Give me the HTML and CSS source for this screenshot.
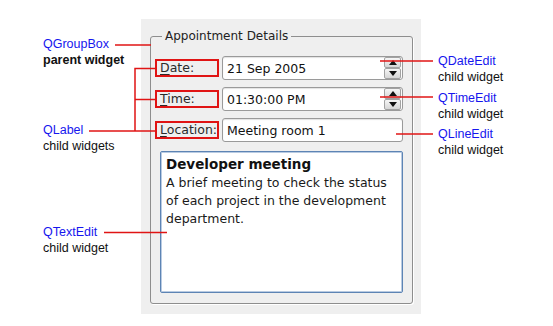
FILE: index.html
```html
<!DOCTYPE html>
<html lang="en">

<head>
  <meta charset="UTF-8">
  <title>Appointment Details widgets</title>
  <link rel="stylesheet" href="styles.css">
</head>

<body>
  <div class="diagram">

    <div class="notes notes--left">
      <p class="note note--groupbox"><span class="note__name">QGroupBox</span><br><b>parent widget</b></p>
      <p class="note note--label"><span class="note__name">QLabel</span><br>child widgets</p>
      <p class="note note--textedit"><span class="note__name">QTextEdit</span><br>child widget</p>
    </div>

    <div class="window">
      <fieldset class="group">
        <legend class="group__title">Appointment Details</legend>

        <label class="form-label"><u>D</u>ate:</label>
        <div class="field">
          <span class="field__text">21 Sep 2005</span>
          <span class="spin">
            <span class="spin__btn"><span class="arrow arrow--up"></span></span>
            <span class="spin__btn"><span class="arrow arrow--down"></span></span>
          </span>
        </div>

        <label class="form-label"><u>T</u>ime:</label>
        <div class="field">
          <span class="field__text">01:30:00 PM</span>
          <span class="spin">
            <span class="spin__btn"><span class="arrow arrow--up"></span></span>
            <span class="spin__btn"><span class="arrow arrow--down"></span></span>
          </span>
        </div>

        <label class="form-label"><u>L</u>ocation:</label>
        <div class="field">
          <span class="field__text">Meeting room 1</span>
        </div>

        <div class="text-edit">
          <p class="text-edit__title">Developer meeting</p>
          <p class="text-edit__body">A brief meeting to check the status of each project in the development department.</p>
        </div>
      </fieldset>
    </div>

    <div class="notes notes--right">
      <p class="note note--date"><span class="note__name">QDateEdit</span><br>child widget</p>
      <p class="note note--time"><span class="note__name">QTimeEdit</span><br>child widget</p>
      <p class="note note--line"><span class="note__name">QLineEdit</span><br>child widget</p>
    </div>

    <!-- callout lines -->
    <svg class="callouts" width="553" height="326" viewBox="0 0 553 326">
      <g stroke="#e01414" stroke-width="1.5" fill="none">
        <line x1="115" y1="45" x2="151" y2="45" />
        <polyline points="155,68.5 135,68.5 135,131" />
        <line x1="135" y1="99.5" x2="155" y2="99.5" />
        <line x1="89" y1="131" x2="155" y2="131" />
        <line x1="104" y1="232.5" x2="167" y2="232.5" />
        <line x1="380" y1="61" x2="433" y2="61" />
        <line x1="380" y1="97" x2="433" y2="97" />
        <line x1="396" y1="134" x2="433" y2="134" />
      </g>
    </svg>
  </div>
</body>

</html>
```

FILE: styles.css
```css
body {
  margin: 0;
  background-color: #ffffff;
}

.diagram {
  position: relative;
  display: flex;
  width: 553px;
  height: 326px;
}

/* callout texts */

.notes {
  font-family: 'Liberation Sans', Arial, sans-serif;
  font-size: 12.5px;
  line-height: 16px;
  color: #111111;
}

.notes--left {
  width: 141px;
  padding-left: 43px;
  box-sizing: border-box;
}

.notes--right {
  padding-left: 17px;
}

.note {
  margin: 0;
}

.note__name {
  color: #1616ee;
}

.note--groupbox {
  margin-top: 36px;
}

.note--label {
  margin-top: 54px;
}

.note--textedit {
  margin-top: 70px;
}

.note--date {
  margin-top: 53px;
}

.note--time {
  margin-top: 5px;
}

.note--line {
  margin-top: 4px;
}

.callouts {
  position: absolute;
  top: 0;
  left: 0;
  pointer-events: none;
}

/* the dialog */

.window {
  width: 280px;
  margin-top: 19px;
  padding: 10px 8px 10px 9px;
  box-sizing: border-box;
  align-self: flex-start;
  background-color: #efefef;
  font-family: 'DejaVu Sans', sans-serif;
  font-size: 12.5px;
  color: #1a1a1a;
}

.group {
  margin: 0;
  min-width: 0;
  padding: 13px 8px 10px 4px;
  border: 1px solid #8e8e8e;
  border-radius: 3px;
  box-shadow: 1px 1px 0 #ffffff;
  display: grid;
  grid-template-columns: 64px 181px;
  grid-template-rows: 24px 24px 24px 144px;
  column-gap: 3px;
  row-gap: 7px;
}

.group__title {
  margin-left: 7px;
  padding: 0 3px;
  font-size: 12px;
  line-height: 14px;
  color: #222222;
}

.form-label {
  align-self: center;
  height: 18px;
  padding-left: 3px;
  border: 2px solid #e01414;
  box-sizing: border-box;
  line-height: 14px;
  color: #2a2a2a;
  white-space: nowrap;
}

.form-label u {
  text-underline-offset: 2px;
}

.field {
  display: flex;
  align-items: center;
  padding: 0 1px 0 4px;
  background-color: #ffffff;
  border: 1px solid #9a9a9a;
  border-radius: 3px;
  box-shadow: inset 0 1px 1px #e2e2e2;
}

.field__text {
  flex: 1;
  color: #111111;
}

.spin {
  display: flex;
  flex-direction: column;
  width: 17px;
  height: 22px;
}

.spin__btn {
  flex: 1;
  display: flex;
  align-items: center;
  justify-content: center;
  border: 1px solid #a2a2a2;
  border-radius: 2px;
  background: linear-gradient(#f6f6f6, #d6d6d6);
}

.arrow {
  width: 0;
  height: 0;
  border-left: 4px solid transparent;
  border-right: 4px solid transparent;
}

.arrow--up {
  border-bottom: 5px solid #111111;
}

.arrow--down {
  border-top: 5px solid #111111;
}

.text-edit {
  grid-column: 1 / -1;
  margin-left: 5px;
  margin-top: 2px;
  padding: 3px 8px 0 5px;
  background-color: #ffffff;
  border: 1px solid #5d84b4;
  border-radius: 2px;
  box-shadow: inset 0 0 0 1px #b9cbe2;
  box-sizing: border-box;
}

.text-edit__title {
  margin: 0;
  font-size: 13.5px;
  font-weight: bold;
  line-height: 19px;
  color: #111111;
}

.text-edit__body {
  margin: 0;
  line-height: 18px;
  color: #1a1a1a;
}
```
